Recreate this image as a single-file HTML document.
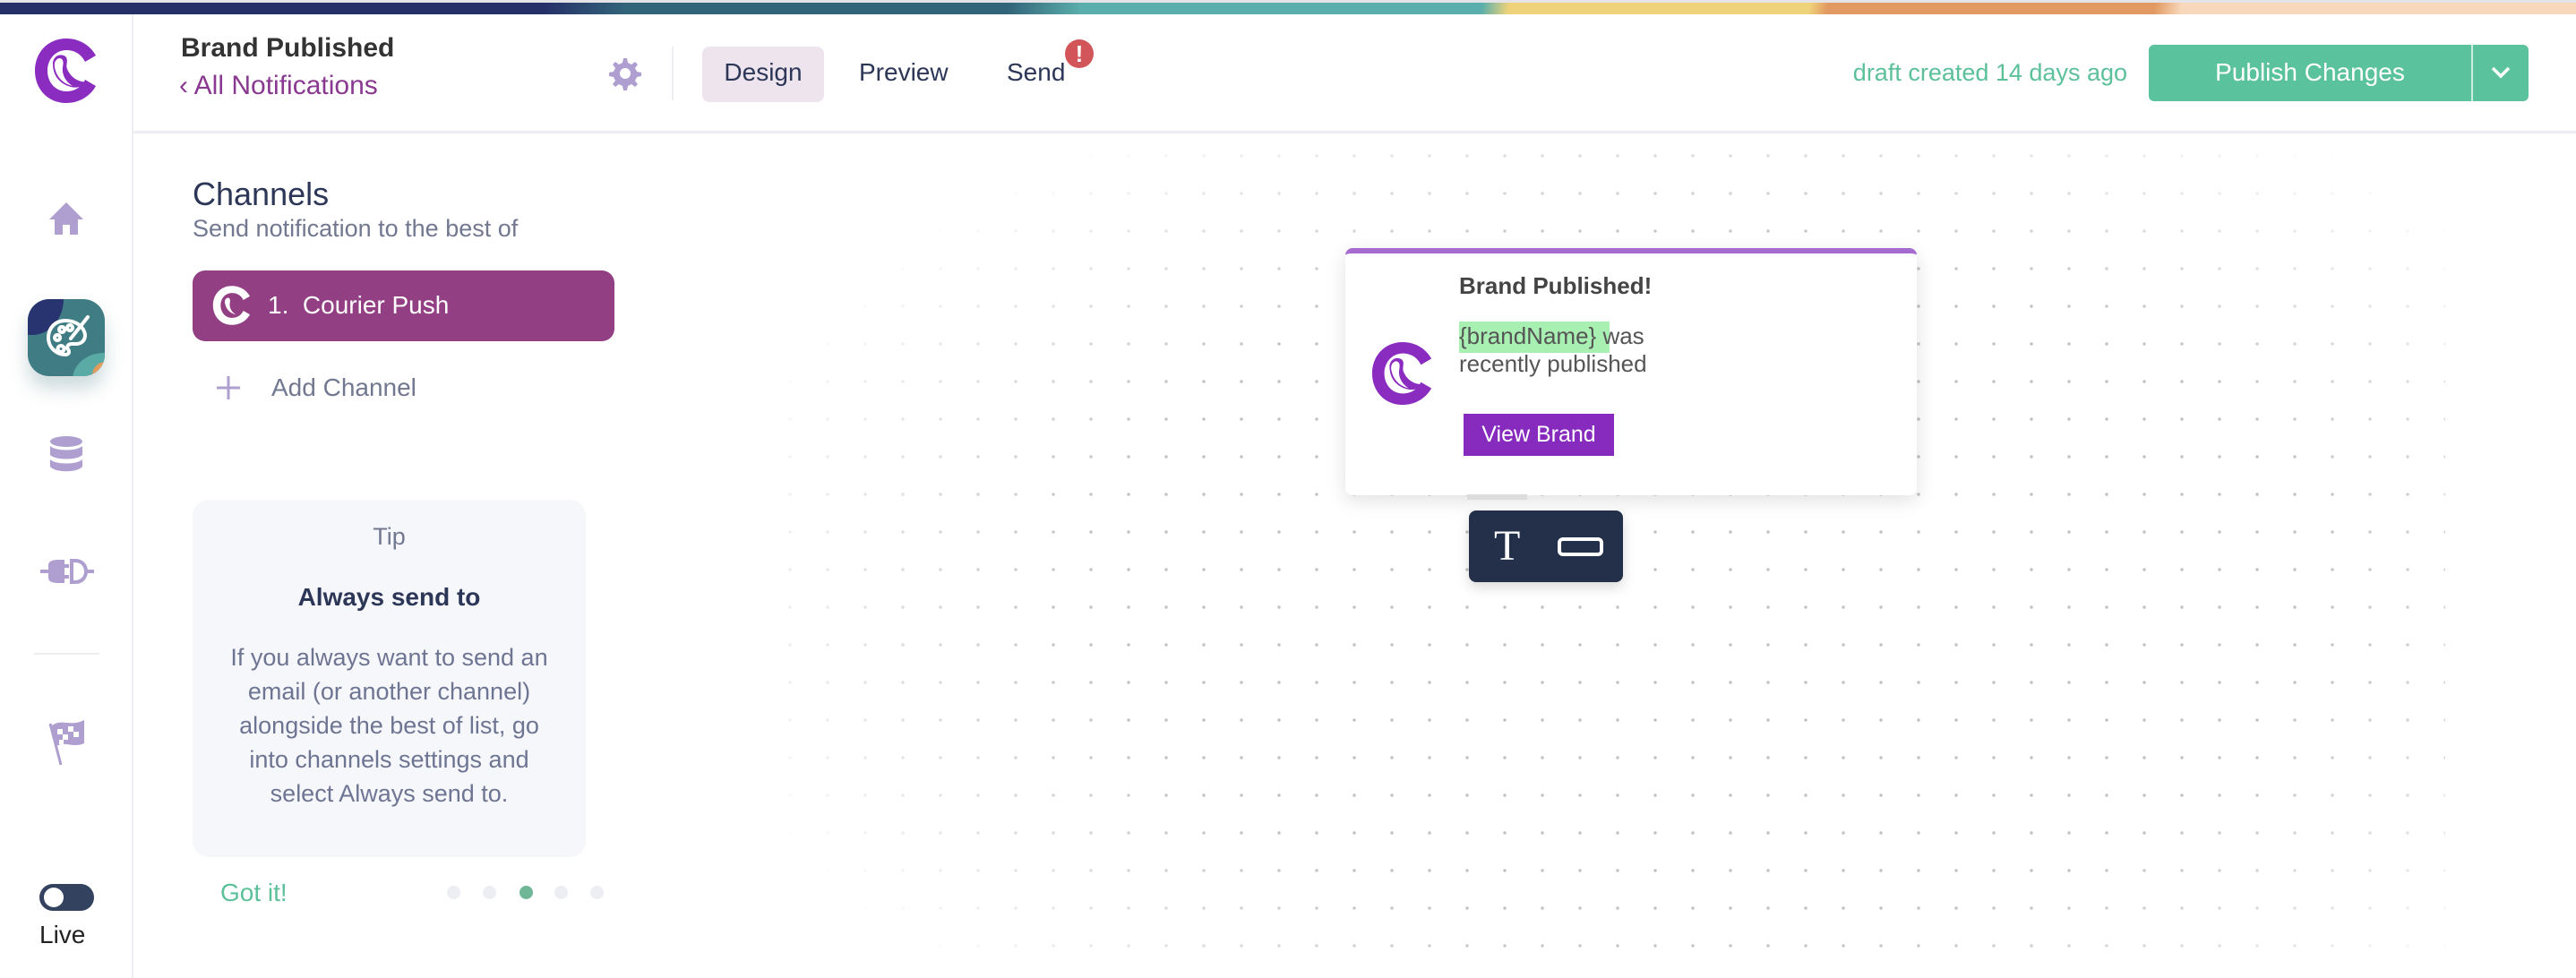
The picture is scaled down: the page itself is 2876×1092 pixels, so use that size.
<!DOCTYPE html>
<html><head><meta charset="utf-8"><style>
*{box-sizing:border-box;margin:0;padding:0}
body{width:2876px;height:1092px;overflow:hidden;background:#fff;font-family:"Liberation Sans",sans-serif;position:relative}
.a{position:absolute}
.topbar{left:0;top:0;width:2876px;height:16px;background:#e4e4e8}
.grad{left:0;top:3px;width:2876px;height:13px;background:linear-gradient(100deg,#253068 0,#253068 600px,#33657a 690px,#33657a 1110px,#5aaeab 1190px,#5aaeab 1630px,#efd37a 1660px,#efd37a 1990px,#e29a62 2010px,#e29a62 2370px,#f8d8bc 2400px)}
.side{left:0;top:16px;width:149px;height:1076px;border-right:2px solid #eeeef2}
.hdr{left:149px;top:146px;width:2727px;height:3px;background:#eceef2}
.t{white-space:nowrap}
.dots{left:880px;top:150px;width:1850px;height:935px;
background-image:radial-gradient(circle,#c4c4c8 1.6px,transparent 2px);background-size:42px 42px;background-position:23px 3px;
-webkit-mask-image:radial-gradient(ellipse 62% 68% at 55% 55%,#000 60%,transparent 100%);mask-image:radial-gradient(ellipse 62% 68% at 55% 55%,#000 60%,transparent 100%)}
.dot{width:15px;height:15px;border-radius:50%;background:#eceef4;top:989px}
</style></head><body>
<div class="a topbar"></div><div class="a grad"></div>
<div class="a side"></div>
<div class="a hdr"></div>

<svg class="a" style="left:37px;top:41px" width="74" height="76" viewBox="0 0 74 76">
<path d="M37 2 C16 2 2 18 2 38 C2 58 16 74 37 74 C52 74 64 66 70 55 L58 48 C54 56 47 61 37 61 C25 61 16 51 16 38 C16 25 25 15 37 15 C47 15 54 20 58 28 L70 21 C64 10 52 2 37 2Z" fill="#8b2cc0"/>
<path d="M36 22 C30 18 22 22 22 30 C22 42 28 52 42 56 C50 58 58 55 62 50 C52 52 42 46 38 36 C36 31 40 26 36 22Z" fill="#8b2cc0"/>
<path d="M30 24 C26 24 23 28 24 34 C26 44 32 52 44 55 C36 50 32 42 33 34 C34 29 34 25 30 24Z" fill="#fff"/>
</svg>

<svg class="a" style="left:54px;top:225px" width="40" height="38" viewBox="0 0 40 38"><path d="M20 1 L39 20 L33 20 L33 37 L24 37 L24 26 L16 26 L16 37 L7 37 L7 20 L1 20Z" fill="#ae9fd0"/></svg>
<div class="a" style="left:31px;top:334px;width:86px;height:86px;border-radius:24px;overflow:hidden;background:#3f7c84;box-shadow:0 14px 20px rgba(60,110,120,.25)">
<div class="a" style="left:-30px;top:-40px;width:70px;height:80px;border-radius:50%;background:#283470"></div>
<div class="a" style="left:50px;top:60px;width:70px;height:60px;border-radius:50%;background:#5aaaa5"></div>
<div class="a" style="left:72px;top:70px;width:30px;height:30px;border-radius:50%;background:#e39b5c"></div>
<svg class="a" style="left:20px;top:18px" width="50" height="50" viewBox="0 0 50 50"><path d="M22 6 C10 6 3 15 3 25 C3 36 12 44 22 44 C26 44 27 41 25 38 C23 35 25 32 29 32 L34 32 C40 32 44 28 44 22 C43 13 34 6 22 6Z M13 22 a3 3 0 1 0 .1 0Z M18 13 a3 3 0 1 0 .1 0Z M27 11 a3 3 0 1 0 .1 0Z M17 34 a3.5 3.5 0 1 0 .1 0Z" fill="none" stroke="#fff" stroke-width="4"/><path d="M47 2 L28 26" stroke="#fff" stroke-width="4" stroke-linecap="round"/></svg>
</div>
<svg class="a" style="left:54px;top:486px" width="40" height="42" viewBox="0 0 40 42"><ellipse cx="20" cy="7" rx="18" ry="6" fill="#ae9fd0"/><path d="M2 12 C8 18 32 18 38 12 L38 22 C32 28 8 28 2 22Z M2 27 C8 33 32 33 38 27 L38 35 C32 42 8 42 2 35Z" fill="#ae9fd0"/></svg>
<svg class="a" style="left:44px;top:623px" width="62" height="30" viewBox="0 0 62 30"><path d="M1 15 H10 M52 15 H61" stroke="#ae9fd0" stroke-width="4"/><path d="M10 8 C10 3 16 2 22 2 L28 2 L28 28 L22 28 C16 28 10 27 10 22Z" fill="#ae9fd0"/><path d="M36 3 L40 3 C48 3 52 9 52 15 C52 21 48 27 40 27 L36 27Z" fill="none" stroke="#ae9fd0" stroke-width="4"/><path d="M28 9 H33 M28 21 H33" stroke="#ae9fd0" stroke-width="4"/></svg>
<div class="a" style="left:38px;top:729px;width:73px;height:2px;background:#eceef2"></div>
<svg class="a" style="left:52px;top:798px" width="46" height="58" viewBox="0 0 46 58"><path d="M4 10 L16 56" stroke="#ae9fd0" stroke-width="3"/><path d="M6 12 C18 4 26 14 42 6 L42 32 C28 38 20 28 10 36Z" fill="#ae9fd0"/><path d="M12 16 h6 v6 h-6z M24 13 h6 v6 h-6z M18 22 h6 v6 h-6z M30 19 h6 v6 h-6z M14 28 h5 v5 h-5z" fill="#fff"/></svg>
<div class="a" style="left:44px;top:987px;width:61px;height:30px;border-radius:15px;background:#33425f"></div>
<div class="a" style="left:49px;top:991px;width:22px;height:22px;border-radius:50%;background:#fff"></div>
<div class="a t" style="left:44px;top:1028px;font-size:28px;color:#222">Live</div>

<div class="a t" style="left:202px;top:37px;font-size:30px;font-weight:bold;color:#333">Brand Published</div>
<div class="a t" style="left:200px;top:79px;font-size:30px;color:#8a3990">‹ All Notifications</div>
<svg class="a" style="left:679px;top:63px" width="38" height="38" viewBox="0 0 38 38"><path d="M19 2 l4 0 1 5 4 2 4-3 3 3-3 4 2 4 5 1 0 4-5 1-2 4 3 4-3 3-4-3-4 2-1 5-4 0-1-5-4-2-4 3-3-3 3-4-2-4-5-1 0-4 5-1 2-4-3-4 3-3 4 3 4-2z" fill="#ae9fd0" transform="translate(-2 0)"/><circle cx="19" cy="19" r="6" fill="#fff"/></svg>
<div class="a" style="left:750px;top:52px;width:2px;height:60px;background:#eceef2"></div>
<div class="a" style="left:784px;top:52px;width:136px;height:62px;border-radius:8px;background:#ede4ed"></div>
<div class="a t" style="left:784px;top:65px;width:136px;text-align:center;font-size:28px;color:#2c3657">Design</div>
<div class="a t" style="left:959px;top:65px;font-size:28px;color:#2c3657">Preview</div>
<div class="a t" style="left:1124px;top:65px;font-size:28px;color:#2c3657">Send</div>
<div class="a" style="left:1189px;top:44px;width:32px;height:32px;border-radius:50%;background:#d2555a;color:#fff;font-weight:bold;font-size:26px;text-align:center;line-height:32px">!</div>
<div class="a t" style="left:2055px;top:66px;width:320px;text-align:right;font-size:27px;color:#5cc09b">draft created 14 days ago</div>
<div class="a" style="left:2399px;top:50px;width:424px;height:63px;border-radius:6px;background:#5bc29e"></div>
<div class="a" style="left:2759px;top:50px;width:2px;height:63px;background:#fff;opacity:.7"></div>
<div class="a t" style="left:2399px;top:65px;width:360px;text-align:center;font-size:28px;color:#fff">Publish Changes</div>
<svg class="a" style="left:2780px;top:73px" width="24" height="16" viewBox="0 0 24 16"><path d="M3 3 L12 12 L21 3" stroke="#fff" stroke-width="3.5" fill="none"/></svg>

<div class="a t" style="left:215px;top:196px;font-size:36px;color:#2c3657">Channels</div>
<div class="a t" style="left:215px;top:240px;font-size:27px;color:#727890">Send notification to the best of</div>
<div class="a" style="left:215px;top:302px;width:471px;height:79px;border-radius:14px;background:#933f83"></div>
<svg class="a" style="left:236px;top:318px" width="46" height="46" viewBox="0 0 74 76"><path d="M37 2 C16 2 2 18 2 38 C2 58 16 74 37 74 C52 74 64 66 70 55 L58 48 C54 56 47 61 37 61 C25 61 16 51 16 38 C16 25 25 15 37 15 C47 15 54 20 58 28 L70 21 C64 10 52 2 37 2Z" fill="#fff"/><path d="M30 24 C26 24 23 28 24 34 C26 44 32 52 44 55 C36 50 32 42 33 34 C34 29 34 25 30 24Z" fill="#fff"/></svg>
<div class="a t" style="left:299px;top:325px;font-size:28px;color:#fff">1.&nbsp; Courier Push</div>
<svg class="a" style="left:240px;top:418px" width="30" height="30" viewBox="0 0 30 30"><path d="M15 2 V28 M2 15 H28" stroke="#ae9fd0" stroke-width="3"/></svg>
<div class="a t" style="left:303px;top:417px;font-size:28px;color:#727890">Add Channel</div>

<div class="a" style="left:215px;top:558px;width:439px;height:399px;border-radius:18px;background:#f6f7fa"></div>
<div class="a t" style="left:215px;top:584px;width:439px;text-align:center;font-size:27px;color:#727890">Tip</div>
<div class="a t" style="left:215px;top:651px;width:439px;text-align:center;font-size:28px;font-weight:bold;color:#2c3657">Always send to</div>
<div class="a" style="left:244px;top:715px;width:381px;text-align:center;font-size:27px;line-height:38px;color:#6e7593">If you always want to send an email (or another channel) alongside the best of list, go into channels settings and select Always send to.</div>
<div class="a t" style="left:246px;top:981px;font-size:28px;color:#5cc09b">Got it!</div>
<div class="a dot" style="left:499px"></div><div class="a dot" style="left:539px"></div><div class="a dot" style="left:580px;background:#6fb797"></div><div class="a dot" style="left:619px"></div><div class="a dot" style="left:659px"></div>

<div class="a dots"></div>
<div class="a" style="left:1502px;top:277px;width:638px;height:276px;border-radius:8px;background:#fff;box-shadow:0 6px 22px rgba(0,0,0,.12);overflow:hidden;border-top:6px solid #a66bcf"></div>
<div class="a t" style="left:1629px;top:304px;font-size:26px;font-weight:bold;color:#444">Brand Published!</div>
<svg class="a" style="left:1530px;top:380px" width="72" height="74" viewBox="0 0 74 76">
<path d="M37 2 C16 2 2 18 2 38 C2 58 16 74 37 74 C52 74 64 66 70 55 L58 48 C54 56 47 61 37 61 C25 61 16 51 16 38 C16 25 25 15 37 15 C47 15 54 20 58 28 L70 21 C64 10 52 2 37 2Z" fill="#8b2cc0"/>
<path d="M36 22 C30 18 22 22 22 30 C22 42 28 52 42 56 C50 58 58 55 62 50 C52 52 42 46 38 36 C36 31 40 26 36 22Z" fill="#8b2cc0"/>
<path d="M30 24 C26 24 23 28 24 34 C26 44 32 52 44 55 C36 50 32 42 33 34 C34 29 34 25 30 24Z" fill="#fff"/></svg>
<div class="a" style="left:1629px;top:359px;width:168px;height:35px;background:#a8efb2"></div>
<div class="a" style="left:1629px;top:360px;font-size:26px;line-height:31px;color:#555">{brandName} was<br>recently published</div>
<div class="a t" style="left:1634px;top:462px;width:168px;height:47px;background:#862bbd;color:#fff;font-size:25px;text-align:center;line-height:47px">View Brand</div>
<div class="a" style="left:1638px;top:552px;width:67px;height:6px;background:#dcdcdc"></div>
<div class="a" style="left:1640px;top:570px;width:172px;height:80px;border-radius:8px;background:#243049;box-shadow:0 6px 14px rgba(0,0,0,.15)"></div>
<div class="a t" style="left:1668px;top:582px;font-family:'Liberation Serif',serif;font-size:48px;color:#fff">T</div>
<div class="a" style="left:1739px;top:600px;width:51px;height:21px;border:4px solid #fff;border-radius:6px"></div>
</body></html>
